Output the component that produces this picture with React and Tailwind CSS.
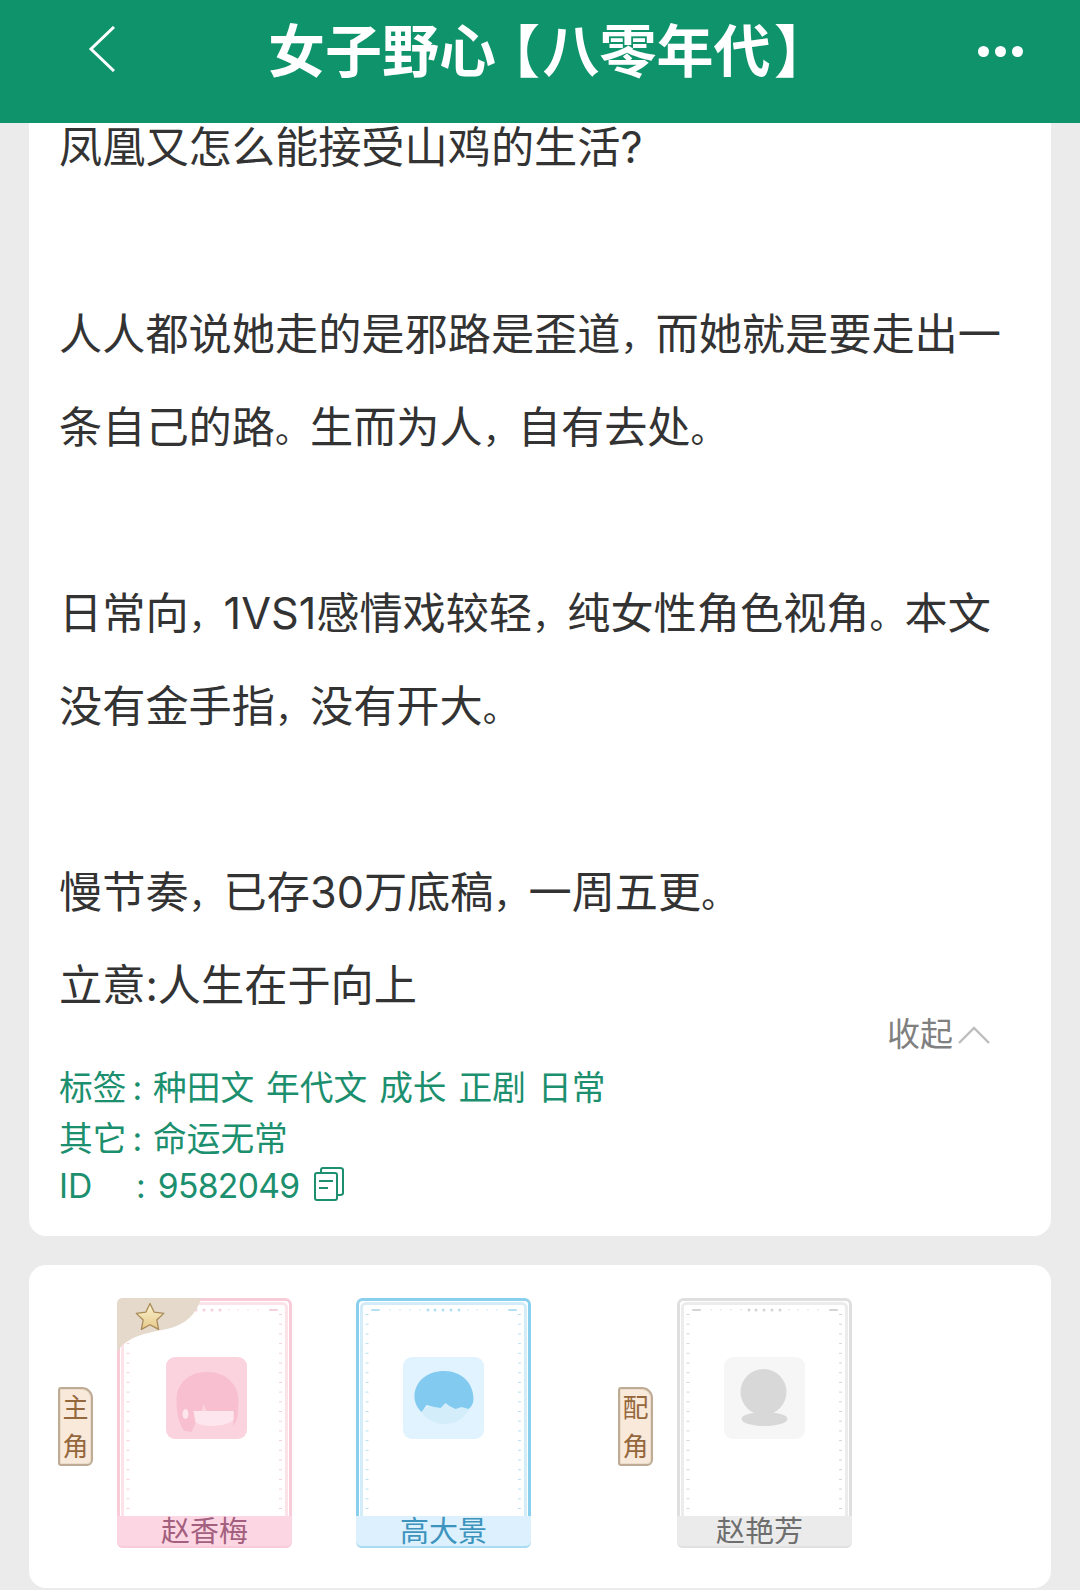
import React from "react";

const FONT = "font-['Inter','Noto_Sans_CJK_SC','Noto_Sans',sans-serif]";

const THEMES = {
  pink: {
    outer: "#f8cbd9",
    inner: "#fce3ea",
    dot: "#f5d0db",
    foot: "bg-[#fdd6e3] border-[#f8cbd9]",
    name: "text-[#a2607e]",
    avatar: "bg-[#fbd3df] left-[49px]",
  },
  blue: {
    outer: "#87cfec",
    inner: "#d2ecf8",
    dot: "#b5e0f2",
    foot: "bg-[#dcf0fd] border-[#a9dcf2]",
    name: "text-[#3c94bd]",
    avatar: "bg-[#e1f3fe] left-[47px]",
  },
  gray: {
    outer: "#dfdfdf",
    inner: "#ececec",
    dot: "#d4d4d4",
    foot: "bg-[#ebebeb] border-[#e0e0e0] pr-[10px]",
    name: "text-[#6e6e6e]",
    avatar: "bg-[#f6f6f6] left-[47px]",
  },
};

function Hair({ type }) {
  if (type === "pink") {
    return (
      <svg viewBox="0 0 80 82" className="w-full h-full">
        <path d="M10 44C10 25 23 15 41 15C59 15 72 27 72 44L71 60L67 70L67 54L40 54L37 47L35 54L27 54L29 66L25 75L18 74C13 68 10 58 10 44Z" fill="#f7bfd0" />
        <path d="M27 54L67 54L67 63C60 70 36 71 29 65Z" fill="#fde6ee" />
        <ellipse cx="19" cy="57" rx="3" ry="5" fill="#fde6ee" />
      </svg>
    );
  }
  if (type === "blue") {
    return (
      <svg viewBox="0 0 80 82" className="w-full h-full">
        <path d="M17 54C24 64 33 67 41 67C52 67 60 62 66 52L40 42Z" fill="#d4edfb" />
        <path d="M11 40C11 24 24 14 41 14C58 14 70 26 70 42C70 46 68 50 65 52L58 50L52 52L46 49L42 46L37 51L31 50L23 48L18 55C14 51 11 46 11 40Z" fill="#82caf0" />
      </svg>
    );
  }
  return (
    <svg viewBox="0 0 80 82" className="w-full h-full">
      <circle cx="39" cy="35" r="23" fill="#d8d8d8" />
      <ellipse cx="40" cy="62" rx="23" ry="7" fill="#d8d8d8" />
    </svg>
  );
}

// the frame with little ticks along the edges
function Frame({ theme }) {
  const t = THEMES[theme];
  const ys = [];
  for (let y = 16; y < 212; y += 9.7) ys.push(y);
  const small = [34, 44, 54, 64, 112, 121, 131, 141];
  const big = [72, 79, 87, 95, 103];
  return (
    <svg viewBox="0 0 175 250" className="absolute inset-0 w-full h-full">
      <rect x="5.5" y="5.5" width="164" height="240" rx="4" fill="none" stroke={t.inner} strokeWidth="3" />
      <rect x="1.5" y="1.5" width="172" height="247" rx="5" fill="none" stroke={t.outer} strokeWidth="3" />
      {ys.map((y) => (
        <g key={y} fill={t.dot}>
          <rect x="9.5" y={y} width="3" height="1" />
          <rect x="162" y={y} width="3" height="1" />
        </g>
      ))}
      {small.map((x) => (
        <circle key={x} cx={x} cy="12" r="0.7" fill={t.dot} />
      ))}
      {big.map((x) => (
        <circle key={x} cx={x} cy="12" r="1.5" fill={t.dot} />
      ))}
      <rect x="15" y="11" width="9" height="2" rx="1" fill={t.dot} />
      <rect x="152" y="11" width="9" height="2" rx="1" fill={t.dot} />
    </svg>
  );
}

function CharacterCard({ theme, name, star }) {
  const t = THEMES[theme];
  return (
    <div className="relative w-[175px] h-[250px] flex flex-col justify-end rounded-[6px] bg-white">
      <Frame theme={theme} />
      {star && (
        <svg viewBox="0 0 84 54" className="absolute left-0 top-0 w-[84px] h-[54px]">
          <defs>
            <linearGradient id="star" x1="0" y1="0" x2="0" y2="1">
              <stop offset="0" stopColor="#fbf3cf" />
              <stop offset="1" stopColor="#e6c98a" />
            </linearGradient>
          </defs>
          <path d="M0 6Q0 0 6 0L84 0C80 16 68 27 50 31C30 35 10 38 0 54Z" fill="#e4d9cb" />
          <path
            d="M33 5.5L37.2 14.2L46.8 15.4L39.8 22L41.6 31.4L33 26.8L24.4 31.4L26.2 22L19.2 15.4L28.8 14.2Z"
            fill="url(#star)"
            stroke="#a98a58"
            strokeWidth="1.3"
            strokeLinejoin="round"
          />
        </svg>
      )}
      <div className={`absolute top-[59px] w-[81px] h-[82px] rounded-[9px] ${t.avatar}`}>
        <Hair type={theme} />
      </div>
      <div className={`relative h-[32px] flex items-center justify-center rounded-b-[6px] border-b-[2px] text-[29px] leading-[29px] ${t.foot} ${t.name}`}>
        {name}
      </div>
    </div>
  );
}

function RoleBadge({ text }) {
  return (
    <div className="w-[35px] h-[79px] pt-[1px] flex flex-col items-center justify-center gap-[13px] rounded-[3px] rounded-tr-[11px] rounded-br-[6px] border-[2px] border-[#bfab94] bg-[#f9e9da] shadow-[inset_0_0_0_1px_#e9dccb] text-[26px] leading-none text-[#95673c]">
      <span>{text}</span>
      <span>角</span>
    </div>
  );
}

// full width punctuation is narrower in the reference
function P({ children }) {
  return <span className="text-[35px] leading-none">{children}</span>;
}

export default function App() {
  return (
    <div className={`w-[1080px] h-[1590px] overflow-hidden bg-[#ebebeb] ${FONT}`}>
      <header className="relative z-10 h-[123px] bg-[#0f936b] text-white">
        <div className="flex items-center h-[103px] pl-[88px] pr-[57px]">
          <svg viewBox="0 0 27 46" className="w-[27px] h-[46px] -mt-[6px]" fill="none" stroke="#ffffff" strokeWidth="3">
            <path d="M26 1L3 23L26 45" />
          </svg>
          <h1 className="ml-[153px] text-[57px] leading-none font-bold whitespace-nowrap">
            女子野心
            <span className="ml-[14px] mr-[4px] [font-feature-settings:'palt']">【</span>
            八零年代
            <span className="ml-[5px] [font-feature-settings:'palt']">】</span>
          </h1>
          <div className="ml-auto flex gap-[6px]">
            <span className="w-[11px] h-[11px] rounded-full bg-white" />
            <span className="w-[11px] h-[11px] rounded-full bg-white" />
            <span className="w-[11px] h-[11px] rounded-full bg-white" />
          </div>
        </div>
      </header>

      <main className="mx-[29px] flex flex-col gap-[29px]">
        <section className="relative h-[1113px] bg-white rounded-b-[17px] px-[30px]">
          <div className="text-[43.2px] leading-[93px] text-[#333333]">
            <p className="mt-[2px] leading-[45px] mb-[118px]">凤凰又怎么能接受山鸡的生活?</p>
            <p className="mb-[93px]">
              人人都说她走的是邪路是歪道<P>，</P>而她就是要走出一条自己的路<P>。</P>生而为人<P>，</P>自有去处<P>。</P>
            </p>
            <p className="mb-[93px]">
              日常向<P>，</P>1VS1感情戏较轻<P>，</P>纯女性角色视角<P>。</P>本文没有金手指<P>，</P>没有开大<P>。</P>
            </p>
            <p>慢节奏<P>，</P>已存30万底稿<P>，</P>一周五更<P>。</P></p>
            <p>立意:人生在于向上</p>
          </div>
          <div className="absolute right-[61px] top-[895px] flex items-center text-[33px] leading-none text-[#808080]">
            收起
            <svg viewBox="0 0 32 18" className="ml-[5px] w-[32px] h-[18px]" fill="none" stroke="#bdbdbd" strokeWidth="2.4">
              <path d="M1 17L16 2L31 17" />
            </svg>
          </div>
          <div className="mt-[30px] text-[33.7px] leading-[51px] text-[#1b8f6e]">
            <div className="flex gap-[12px] whitespace-nowrap">
              <span className="w-[82px]">标签<span className="ml-[6px]">:</span></span>
              <span>种田文</span>
              <span>年代文</span>
              <span>成长</span>
              <span>正剧</span>
              <span>日常</span>
            </div>
            <div className="flex gap-[12px] whitespace-nowrap">
              <span className="w-[82px]">其它<span className="ml-[6px]">:</span></span>
              <span>命运无常</span>
            </div>
            <div className="flex items-center h-[43px] leading-[43px]">
              <span className="w-[77px]">ID</span>
              <span>:</span>
              <span className="ml-[12px] tracking-[-0.7px]">9582049</span>
              <svg viewBox="0 0 30 34" className="ml-[15px] -mt-[4px] w-[30px] h-[34px]" fill="none" stroke="#1b8f6e" strokeWidth="2">
                <path d="M7 5V3Q7 1 9 1H26Q29 1 29 3V26Q29 28 26 28H23" />
                <rect x="1" y="6" width="22" height="27" rx="2" />
                <path d="M5 14H19M5 21H14" />
              </svg>
            </div>
          </div>
        </section>

        <section className="h-[323px] bg-white rounded-[17px] flex items-start pt-[33px] pl-[29px]">
          <div className="mt-[89px]">
            <RoleBadge text="主" />
          </div>
          <div className="ml-[24px]">
            <CharacterCard theme="pink" name="赵香梅" star />
          </div>
          <div className="ml-[64px]">
            <CharacterCard theme="blue" name="高大景" />
          </div>
          <div className="ml-[87px] mt-[89px]">
            <RoleBadge text="配" />
          </div>
          <div className="ml-[24px]">
            <CharacterCard theme="gray" name="赵艳芳" />
          </div>
        </section>
      </main>
    </div>
  );
}
